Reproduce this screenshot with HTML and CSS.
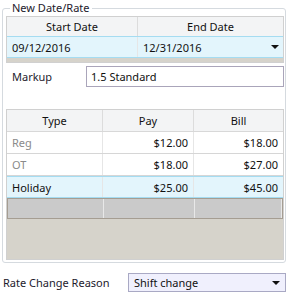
FILE: index.html
```html
<!DOCTYPE html>
<html lang="en">
<head>
    <meta charset="UTF-8">
    <title>New Date/Rate</title>
    <link rel="stylesheet" href="styles.css">
</head>
<body>
    <fieldset class="group">
        <legend>New Date/Rate</legend>

        <div class="grid dates">
            <div class="row head">
                <div class="cell">Start Date</div>
                <div class="cell">End Date</div>
            </div>
            <div class="row selected">
                <div class="cell">09/12/2016</div>
                <div class="cell drop">12/31/2016 <span class="arrow"></span></div>
            </div>
        </div>

        <div class="markup">
            <span class="label">Markup</span>
            <div class="box">1.5 Standard</div>
        </div>

        <div class="grid rates">
            <div class="row head">
                <div class="cell">Type</div>
                <div class="cell">Pay</div>
                <div class="cell">Bill</div>
            </div>
            <div class="row">
                <div class="cell muted">Reg</div>
                <div class="cell money">$12.00</div>
                <div class="cell money">$18.00</div>
            </div>
            <div class="row">
                <div class="cell muted">OT</div>
                <div class="cell money">$18.00</div>
                <div class="cell money">$27.00</div>
            </div>
            <div class="row selected">
                <div class="cell">Holiday</div>
                <div class="cell money">$25.00</div>
                <div class="cell money">$45.00</div>
            </div>
            <div class="row blank">
                <div class="cell"></div>
                <div class="cell"></div>
                <div class="cell"></div>
            </div>
        </div>
    </fieldset>

    <div class="reason">
        <span class="label">Rate Change Reason</span>
        <div class="select">Shift change <span class="arrow"></span></div>
    </div>
</body>
</html>
```

FILE: styles.css
```css
body {
    margin: 0;
    background: #fff;
    font-family: "Noto Sans", sans-serif;
    font-size: 11px;
    color: #111;
    width: 299px;
    height: 303px;
    overflow: hidden;
}

.group {
    box-sizing: border-box;
    width: 284px;
    margin: 1px 0 0 2px;
    padding: 1px 1px 2px 3px;
    border: 1px solid #d5dadf;
    border-radius: 3px;
    min-width: 0;
}

.group legend {
    padding: 0 2px;
    margin-left: 4px;
    line-height: 14px;
    color: #1d1a2c;
}

.grid {
    background: #d6d3cb;
    border: 1px solid #d0d0d0;
}

.row {
    display: grid;
}

.dates .row {
    grid-template-columns: 131px 1fr;
}

.rates .row {
    grid-template-columns: 96px 91px 1fr;
}

.cell {
    display: flex;
    align-items: center;
    padding: 0 5px;
    border-right: 1px solid #e6e6e6;
    white-space: nowrap;
}

.cell:last-child {
    border-right: none;
}

.head .cell {
    justify-content: center;
    background: #f3f4f5;
    border-right: 1px solid #dcdcdc;
    color: #111;
}

.head .cell:last-child {
    border-right: none;
}

.dates .head {
    height: 19px;
}

.dates .selected {
    height: 20px;
    border-top: 1px solid #a5dcf1;
    border-bottom: 1px solid #a5dcf1;
}

.dates {
    height: 45px;
}

.rates {
    height: 149px;
    margin-top: 22px;
}

.rates .head {
    height: 21px;
    border-bottom: 1px solid #d8d8d8;
}

.rates .row {
    background: #fff;
}

.rates .row:not(.head) {
    height: 21px;
    border-bottom: 1px solid #d6d6d6;
}

.row.selected {
    background: #e3f5fc;
}

.rates .row.selected {
    border-top: 1px solid #a5dcf1;
    border-bottom: 1px solid #a5dcf1;
    height: 20px;
}

.rates .row.blank {
    background: #cacaca;
    border: 1px solid #a59d92;
    height: 19px;
}

.blank .cell {
    border-right: 1px solid #e8e8e8;
}

.muted {
    color: #8a8a8a;
}

.money {
    justify-content: flex-end;
}

.drop {
    justify-content: space-between;
    padding-right: 4px;
}

.arrow {
    width: 0;
    height: 0;
    border-left: 4px solid transparent;
    border-right: 4px solid transparent;
    border-top: 4px solid #111;
}

.markup {
    display: grid;
    grid-template-columns: 80px 1fr;
    align-items: center;
    margin-top: 3px;
}

.label {
    padding-left: 6px;
    color: #1d1a2c;
}

.box {
    box-sizing: border-box;
    height: 21px;
    border: 1px solid #aaa5ba;
    padding: 0 4px;
    display: flex;
    align-items: center;
}

.reason {
    display: grid;
    grid-template-columns: 128px 158px;
    align-items: center;
    margin-top: 10px;
}

.reason .label {
    padding-left: 3px;
}

.select {
    box-sizing: border-box;
    height: 19px;
    background: #f0f0fd;
    border: 1px solid #a9a9c4;
    padding: 0 5px 0 5px;
    display: flex;
    align-items: center;
    justify-content: space-between;
}
```
